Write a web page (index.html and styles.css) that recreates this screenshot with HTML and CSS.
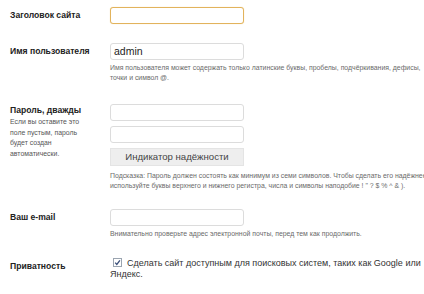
FILE: index.html
```html
<!DOCTYPE html>
<html lang="ru">
<head>
    <meta charset="UTF-8">
    <title>Установка</title>
    <link rel="stylesheet" href="styles.css">
</head>
<body>
    <div class="form">
        <div class="row row-title">
            <div class="label">Заголовок сайта</div>
            <div class="field">
                <div class="input focus"></div>
            </div>
        </div>
        <div class="row row-user">
            <div class="label">Имя пользователя</div>
            <div class="field">
                <div class="input">admin</div>
                <p class="help">Имя пользователя может содержать только латинские буквы, пробелы, подчёркивания, дефисы, точки и символ @.</p>
            </div>
        </div>
        <div class="row row-pass">
            <div class="label">
                Пароль, дважды
                <p class="sub">Если вы оставите это поле пустым, пароль будет создан автоматически.</p>
            </div>
            <div class="field">
                <div class="input"></div>
                <div class="input"></div>
                <div class="meter">Индикатор надёжности</div>
                <p class="help hint">Подсказка: Пароль должен состоять как минимум из семи символов. Чтобы сделать его надёжнее, используйте буквы верхнего и нижнего регистра, числа и символы наподобие ! " ? $ % ^ &amp; ).</p>
            </div>
        </div>
        <div class="row row-mail">
            <div class="label">Ваш e-mail</div>
            <div class="field">
                <div class="input"></div>
                <p class="help">Внимательно проверьте адрес электронной почты, перед тем как продолжить.</p>
            </div>
        </div>
        <div class="row row-priv">
            <div class="label">Приватность</div>
            <div class="field">
                <p class="check"><svg class="box" width="9" height="9" viewBox="0 0 9 9"><rect x="0.5" y="0.5" width="8" height="8" fill="#fff" stroke="#9aa4b0"/><path d="M2.2 4.6 L3.8 6.4 L6.9 2.3" fill="none" stroke="#3a4f7a" stroke-width="1.3"/></svg>Сделать сайт доступным для поисковых систем, таких как Google или Яндекс.</p>
            </div>
        </div>
    </div>
</body>
</html>
```

FILE: styles.css
```css
body { margin: 0; background: #fff; font-family: "Liberation Sans", Arial, sans-serif; color: #333; overflow: hidden; }
.form { padding: 7px 0 0 10px; }
.row { display: grid; grid-template-columns: 100px 1fr; align-items: start; }
.label { font-size: 8.6px; font-weight: 700; color: #222; line-height: 17px; }
.field { display: flex; flex-direction: column; gap: 5px; width: 330px; }
.input { box-sizing: border-box; width: 134px; height: 17px; border: 1px solid #dcdcdc; border-radius: 3px; background: #fff; font-size: 10.5px; color: #222; line-height: 15px; padding: 0 3px; }
.input.focus { border-color: #e2b35c; box-shadow: 0 0 1px #f0d49a; }
.help { margin: -2px 0 0; font-size: 6.9px; line-height: 10px; color: #6a6a6a; width: 320px; }
.row-user { margin-top: 19px; }
.row-pass { margin-top: 21px; }
.row-mail { margin-top: 18px; }
.row-priv { margin-top: 19px; }
.sub { margin: 0; font-size: 6.9px; font-weight: 400; line-height: 10.5px; color: #555; width: 82px; }
.row-pass .label { line-height: 13px; }
.meter { box-sizing: border-box; width: 134px; height: 18px; background: #eeeeee; border: 1px solid #e4e4e4; font-size: 9.6px; font-weight: 400; line-height: 16px; text-align: center; color: #444; }
.hint { margin-top: 0; width: 330px; }
.check { margin: 0; font-size: 9px; line-height: 11px; color: #333; width: 316px; }
.box { vertical-align: -1px; margin: 0 5px 0 3px; }
```
